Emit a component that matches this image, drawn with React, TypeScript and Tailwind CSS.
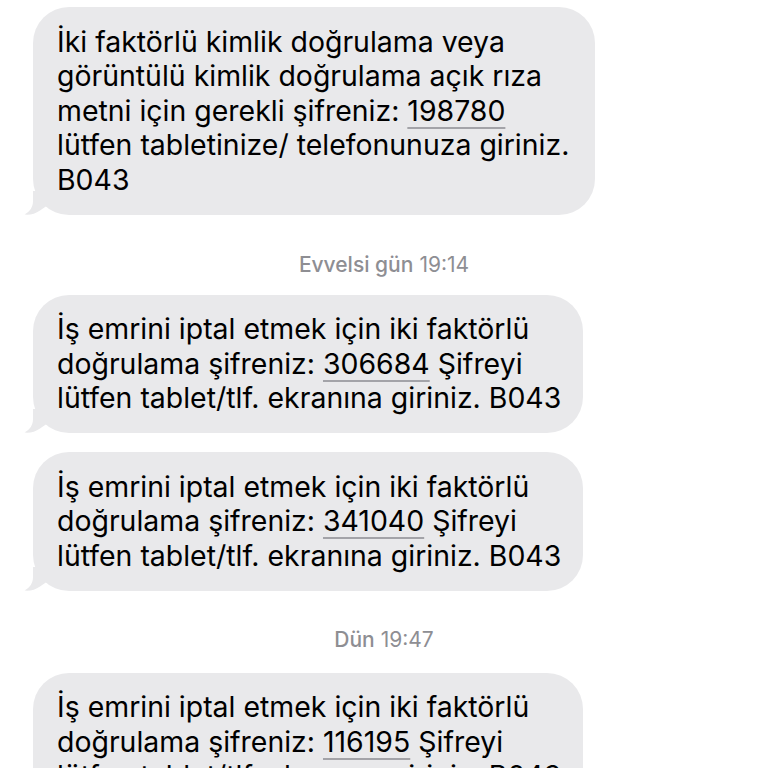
import React from "react";

const font = { fontFamily: "Inter, 'Liberation Sans', sans-serif" };

function Tail() {
  return (
    <svg
      className="absolute -left-[9px] bottom-0"
      width="24"
      height="24"
      viewBox="0 0 24 24"
    >
      <path
        d="M9 0 L9 10 C9 16 6 20.5 0.5 23.6 C6 24.2 11.5 22.8 16 19.5 L24 14 L24 0 Z"
        fill="#e9e9eb"
      />
    </svg>
  );
}

function Code({ children }: { children: React.ReactNode }) {
  return (
    <span className="underline decoration-[#a3a3a8] decoration-2 underline-offset-[6px]">
      {children}
    </span>
  );
}

function Bubble({ width, children }: { width: string; children: React.ReactNode }) {
  return (
    <div className={`relative ${width} rounded-[36px] bg-[#e9e9eb] pl-[24px] pr-[20px] py-[17.5px]`}>
      <Tail />
      <div className="relative text-[28.45px] leading-[34.5px] text-black" style={font}>
        {children}
      </div>
    </div>
  );
}

function Stamp({ day, time }: { day: string; time: string }) {
  return (
    <div
      className="flex justify-center pr-[33px] text-[21px] leading-[25px] text-[#8e8e93]"
      style={font}
    >
      <span className="font-medium">{day}</span>
      <span className="ml-[6px]">{time}</span>
    </div>
  );
}

export default function App() {
  return (
    <div className="h-[768px] w-[768px] overflow-hidden bg-white">
      <div className="flex flex-col pl-[33px] pt-[7px]">
        <Bubble width="w-[562px]">
          İki faktörlü kimlik doğrulama veya
          <br />
          görüntülü kimlik doğrulama açık rıza
          <br />
          metni için gerekli şifreniz: <Code>198780</Code>
          <br />
          lütfen tabletinize/ telefonunuza giriniz.
          <br />
          B043
        </Bubble>

        <div className="pt-[37px] pb-[18px]">
          <Stamp day="Evvelsi gün" time="19:14" />
        </div>

        <div className="flex flex-col gap-[19px]">
          <Bubble width="w-[550px]">
            İş emrini iptal etmek için iki faktörlü
            <br />
            doğrulama şifreniz: <Code>306684</Code> Şifreyi
            <br />
            lütfen tablet/tlf. ekranına giriniz. B043
          </Bubble>
          <Bubble width="w-[550px]">
            İş emrini iptal etmek için iki faktörlü
            <br />
            doğrulama şifreniz: <Code>341040</Code> Şifreyi
            <br />
            lütfen tablet/tlf. ekranına giriniz. B043
          </Bubble>
        </div>

        <div className="pt-[36px] pb-[21px]">
          <Stamp day="Dün" time="19:47" />
        </div>

        <Bubble width="w-[550px]">
          İş emrini iptal etmek için iki faktörlü
          <br />
          doğrulama şifreniz: <Code>116195</Code> Şifreyi
          <br />
          lütfen tablet/tlf. ekranına giriniz. B043
        </Bubble>
      </div>
    </div>
  );
}
